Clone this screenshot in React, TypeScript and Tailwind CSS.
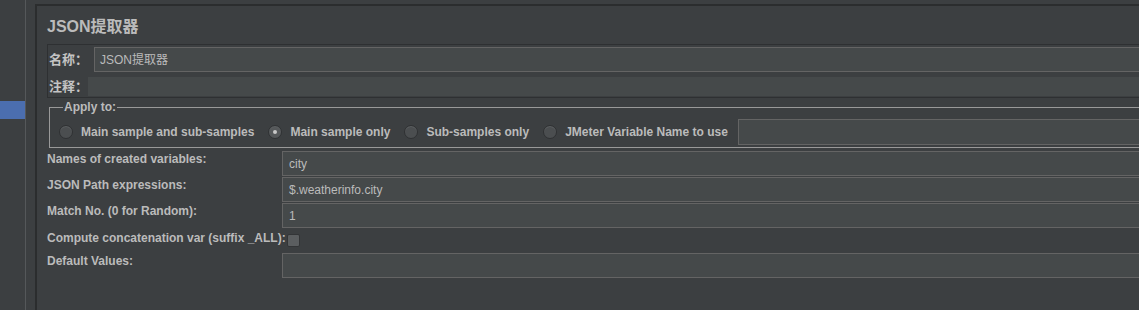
import React from 'react';

const FONT = "font-[family-name:'Liberation_Sans','Noto_Sans_CJK_SC',sans-serif]";

const Radio: React.FC<{ label: string; checked?: boolean }> = ({ label, checked }) => (
  <label className="flex items-center gap-[8px]">
    <span
      className={`flex h-[14px] w-[14px] items-center justify-center rounded-full border border-[#2f3133] ${
        checked ? 'bg-[#55585a]' : 'bg-[#4b4e50]'
      } shadow-[inset_0_1px_0_#5d6062]`}
    >
      {checked && <span className="h-[4px] w-[4px] rounded-full bg-[#c8c8c8]" />}
    </span>
    <span className="text-[12px] font-bold leading-[14px] text-[#bbbbbb]">{label}</span>
  </label>
);

const Field: React.FC<{ value?: string }> = ({ value }) => (
  <div className="flex h-[25px] items-center border border-r-0 border-[#646464] bg-[#45494a] pl-[6px] text-[12px] text-[#bbbbbb]">
    {value}
  </div>
);

const rows = [
  { label: 'Names of created variables:', value: 'city' },
  { label: 'JSON Path expressions:', value: '$.weatherinfo.city' },
  { label: 'Match No. (0 for Random):', value: '1' },
];

const App: React.FC = () => {
  return (
    <div className={`flex h-[310px] w-[1139px] overflow-hidden bg-[#3c3f41] ${FONT}`}>
      {/* Tree strip */}
      <div className="w-[25px] shrink-0">
        <div className="mt-[101px] h-[18px] bg-[#4b6eaf]" />
      </div>
      <div className="w-px shrink-0 bg-[#55585a]" />
      <div className="w-[9px] shrink-0" />

      {/* Editor panel */}
      <div className="mt-[4px] flex-1 border-l-2 border-t-2 border-[#2b2d2e] pl-[10px]">
        <h1 className="mt-[11px] text-[16px] font-bold leading-[20px] text-[#bbbbbb]">JSON提取器</h1>

        {/* Name / comment */}
        <div className="mt-[7px] border border-r-0 border-[#2e3032] pb-[1px] pt-[2px]">
          <div className="flex items-center">
            <span className="w-[46px] pl-[1px] text-[13px] font-bold text-[#c4c4c4]">名称：</span>
            <div className="flex h-[25px] flex-1 items-center border border-r-0 border-[#646464] bg-[#45494a] pl-[5px] text-[12px] text-[#bbbbbb]">
              JSON提取器
            </div>
          </div>
          <div className="mt-[5px] flex items-center">
            <span className="w-[40px] pl-[1px] text-[13px] font-bold leading-[19px] text-[#c4c4c4]">注释：</span>
            <div className="h-[19px] flex-1 bg-[#45494a]" />
          </div>
        </div>

        {/* Apply to */}
        <fieldset className="ml-[2px] mt-[2px] border border-r-0 border-[#999999] pb-[2px] pl-[9px]">
          <legend className="ml-[4px] px-[1px] text-[12px] font-bold leading-[14px] text-[#bbbbbb]">Apply to:</legend>
          <div className="mt-[5px] flex h-[26px] items-center">
            <Radio label="Main sample and sub-samples" />
            <div className="w-[14px]" />
            <Radio label="Main sample only" checked />
            <div className="w-[14px]" />
            <Radio label="Sub-samples only" />
            <div className="w-[14px]" />
            <Radio label="JMeter Variable Name to use" />
            <div className="ml-[10px] h-[26px] flex-1 border border-r-0 border-[#646464] bg-[#45494a]" />
          </div>
        </fieldset>

        {/* Extractor settings */}
        <div className="mt-[3px] grid grid-cols-[235px_1fr] gap-y-px">
          {rows.map((r) => (
            <React.Fragment key={r.label}>
              <span className="pt-px text-[12px] font-bold leading-[14px] text-[#bbbbbb]">{r.label}</span>
              <Field value={r.value} />
            </React.Fragment>
          ))}
          <span className="whitespace-nowrap pt-[2px] text-[12px] font-bold leading-[14px] text-[#bbbbbb]">
            Compute concatenation var (suffix _ALL):
          </span>
          <div className="h-[23px] pt-[5px]">
            <span className="ml-[5px] block h-[13px] w-[13px] rounded-[2px] border border-[#333537] bg-[#5b5e60]" />
          </div>
          <span className="pt-px text-[12px] font-bold leading-[14px] text-[#bbbbbb]">Default Values:</span>
          <Field />
        </div>
      </div>
    </div>
  );
};

export default App;
